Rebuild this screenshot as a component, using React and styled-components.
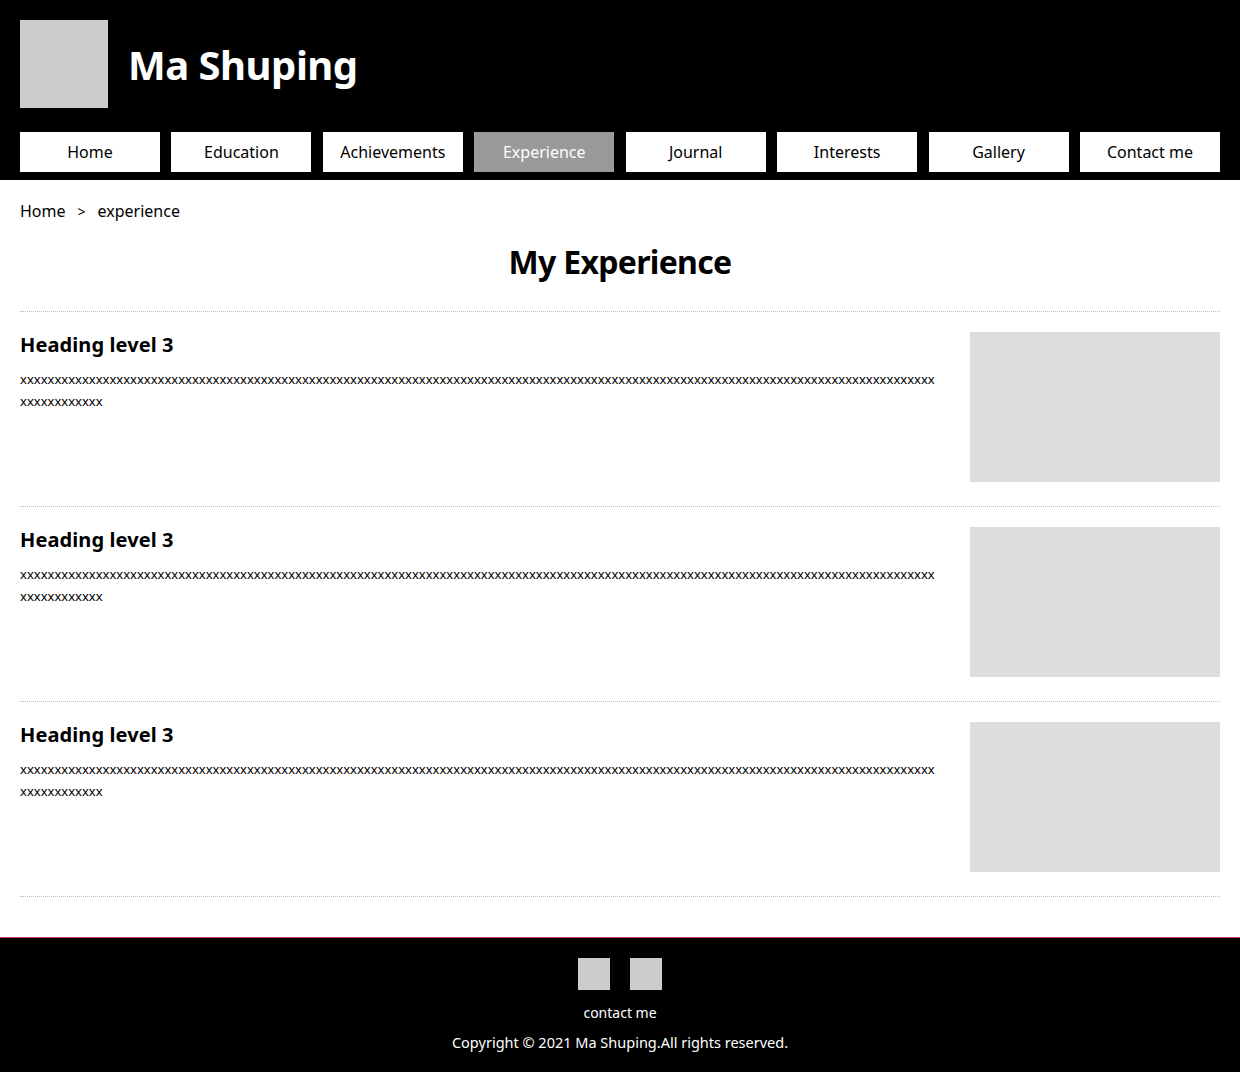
import React from "react";
import styled, { createGlobalStyle } from "styled-components";

const Global = createGlobalStyle`
  html, body { margin: 0; padding: 0; background: #fff; }
  body { font-family: "Noto Sans", "Open Sans", sans-serif; color: #000; }
  * { box-sizing: border-box; }
`;

const Header = styled.header`
  background: #000;
  padding: 20px 20px 8px;
`;

const Brand = styled.div`
  display: flex;
  align-items: center;
  gap: 20px;
  height: 88px;
`;

const Logo = styled.div`
  width: 88px;
  height: 88px;
  background: #ccc;
`;

const Title = styled.h1`
  margin: 0;
  color: #fff;
  font-size: 40px;
  font-weight: 700;
  letter-spacing: -0.5px;
`;

const Nav = styled.nav`
  margin-top: 24px;
  display: flex;
  justify-content: space-between;
`;

const NavItem = styled.a`
  width: 140px;
  height: 40px;
  display: flex;
  align-items: center;
  justify-content: center;
  font-size: 16px;
  color: ${(p) => (p.$active ? "#fff" : "#000")};
  background: ${(p) => (p.$active ? "#999" : "#fff")};
  text-decoration: none;
`;

const Main = styled.main`
  padding: 0 20px;
`;

const Crumbs = styled.div`
  display: flex;
  gap: 12px;
  font-size: 16px;
  height: 22px;
  align-items: center;
  margin-top: 20px;
`;

const Sep = styled.span`
  font-size: 14px;
`;

const PageTitle = styled.h2`
  margin: 18px 0 0;
  text-align: center;
  font-size: 32px;
  font-weight: 700;
  line-height: 44px;
  letter-spacing: -0.7px;
`;

const List = styled.div`
  margin-top: 27px;
  border-bottom: 1px dotted #bbb;
`;

const Item = styled.section`
  display: flex;
  justify-content: space-between;
  gap: 30px;
  border-top: 1px dotted #bbb;
  padding: 20px 0 24px;
`;

const Body = styled.div`
  flex: 1;
  min-width: 0;
`;

const ItemTitle = styled.h3`
  margin: 1px 0 0;
  font-size: 20px;
  font-weight: 700;
  line-height: 24px;
  letter-spacing: 0.1px;
`;

const Text = styled.p`
  margin: 11px 0 0;
  font-size: 13px;
  line-height: 22px;
  word-break: break-all;
`;

const Picture = styled.div`
  flex: none;
  width: 250px;
  height: 150px;
  background: #ddd;
`;

const Footer = styled.footer`
  margin-top: 40px;
  background: #000;
  border-top: 1px solid #d0406f;
  padding: 20px 0 19px;
  display: flex;
  flex-direction: column;
  align-items: center;
  color: #fff;
`;

const Socials = styled.div`
  display: flex;
  gap: 20px;
`;

const Social = styled.div`
  width: 32px;
  height: 32px;
  background: #ccc;
`;

const FootLink = styled.div`
  margin-top: 12px;
  font-size: 14px;
  line-height: 22px;
`;

const Copy = styled.div`
  margin-top: 7px;
  font-size: 14.5px;
  line-height: 22px;
`;

const navItems = [
  "Home",
  "Education",
  "Achievements",
  "Experience",
  "Journal",
  "Interests",
  "Gallery",
  "Contact me",
];

const xs = "x".repeat(145);

export default function App() {
  return (
    <>
      <Global />
      <Header>
        <Brand>
          <Logo />
          <Title>Ma Shuping</Title>
        </Brand>
        <Nav>
          {navItems.map((n) => (
            <NavItem key={n} href="#" $active={n === "Experience"}>
              {n}
            </NavItem>
          ))}
        </Nav>
      </Header>
      <Main>
        <Crumbs>
          <span>Home</span>
          <Sep>&gt;</Sep>
          <span>experience</span>
        </Crumbs>
        <PageTitle>My Experience</PageTitle>
        <List>
          {[0, 1, 2].map((i) => (
            <Item key={i}>
              <Body>
                <ItemTitle>Heading level 3</ItemTitle>
                <Text>{xs}</Text>
              </Body>
              <Picture />
            </Item>
          ))}
        </List>
      </Main>
      <Footer>
        <Socials>
          <Social />
          <Social />
        </Socials>
        <FootLink>contact me</FootLink>
        <Copy>Copyright © 2021 Ma Shuping.All rights reserved.</Copy>
      </Footer>
    </>
  );
}
